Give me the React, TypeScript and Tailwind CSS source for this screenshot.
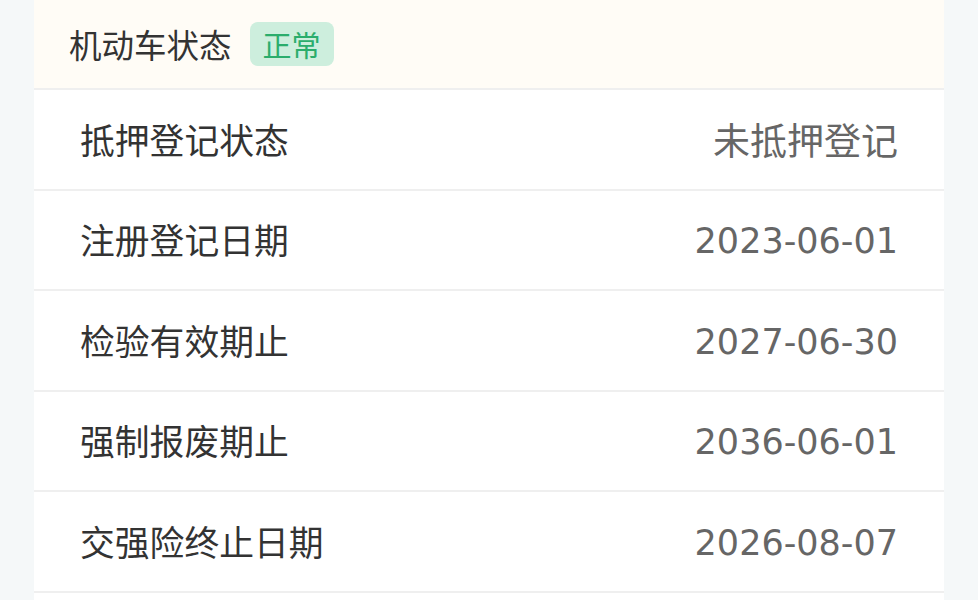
const rows = [
  { label: "抵押登记状态", value: "未抵押登记", date: false },
  { label: "注册登记日期", value: "2023-06-01", date: true },
  { label: "检验有效期止", value: "2027-06-30", date: true },
  { label: "强制报废期止", value: "2036-06-01", date: true },
  { label: "交强险终止日期", value: "2026-08-07", date: true },
];

export default function App() {
  return (
    <div className="h-[600px] overflow-hidden bg-[#f5f8f9] px-[34px] font-['Noto_Sans_CJK_SC',sans-serif]">
      <div className="w-[910px] bg-white">
        <div className="flex h-[88px] items-center gap-[18px] bg-[#fffcf6] pl-[35px]">
          <span className="text-[32.5px] leading-none text-[#333]">机动车状态</span>
          <span className="flex h-[44px] w-[84px] items-center justify-center rounded-[8px] bg-[#cdeedd] text-[29px] leading-none text-[#2bad6c]">
            正常
          </span>
        </div>
        {rows.map((r) => (
          <div
            key={r.label}
            className="flex h-[100.5px] items-center justify-between border-t-2 border-[#efefef] pl-[46px] pr-[46px]"
          >
            <span className="text-[34.8px] leading-none text-[#333]">{r.label}</span>
            {r.date ? (
              <span className="pt-[4px] font-['DejaVu_Sans',sans-serif] text-[35px] leading-none text-[#666]">
                {r.value}
              </span>
            ) : (
              <span className="text-[37px] leading-none text-[#666]">{r.value}</span>
            )}
          </div>
        ))}
        <div className="h-[20px] border-t-2 border-[#efefef]" />
      </div>
    </div>
  );
}
